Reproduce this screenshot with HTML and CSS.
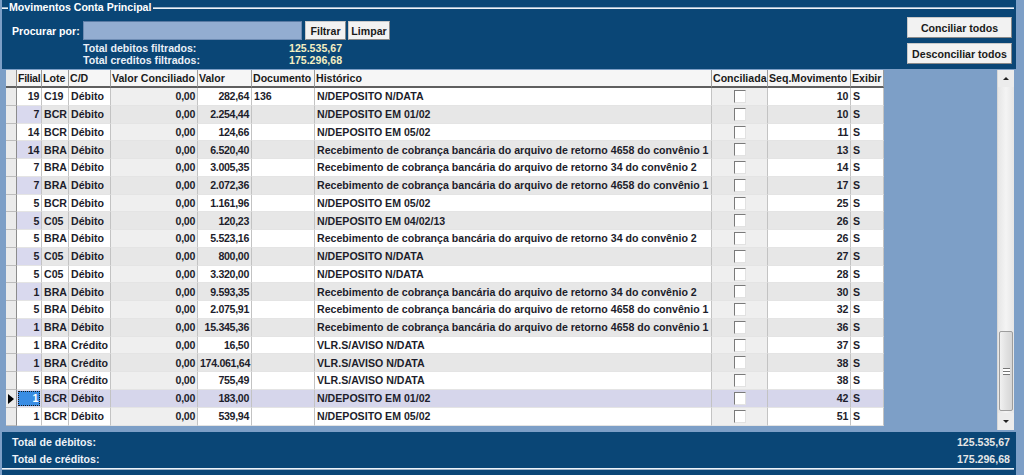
FILE: index.html
```html
<!DOCTYPE html>
<html lang="pt-BR">

<head>
    <meta charset="UTF-8">
    <title>Movimentos Conta Principal</title>
    <link rel="stylesheet" href="styles.css">
</head>

<body>
    <div class="frame">
        <div class="legend">
            <span class="legend-dash"></span>
            <span class="legend-text">Movimentos Conta Principal</span>
            <span class="legend-line"></span>
        </div>

        <div class="top">
            <div class="filters">
                <div class="search-row">
                    <label class="search-label">Procurar por:</label>
                    <input type="text" class="search-input">
                    <button class="btn btn-filter">Filtrar</button>
                    <button class="btn btn-clear">Limpar</button>
                </div>
                <div class="total-row">
                    <span class="total-label">Total debitos filtrados:</span>
                    <span class="total-value">125.535,67</span>
                </div>
                <div class="total-row">
                    <span class="total-label">Total creditos filtrados:</span>
                    <span class="total-value">175.296,68</span>
                </div>
            </div>
            <div class="actions">
                <button class="btn btn-wide">Conciliar todos</button>
                <button class="btn btn-wide">Desconciliar todos</button>
            </div>
        </div>

        <div class="grid">
            <table class="moves">
                <colgroup>
                    <col style="width:11px">
                    <col style="width:25px">
                    <col style="width:27px">
                    <col style="width:42px">
                    <col style="width:87px">
                    <col style="width:54px">
                    <col style="width:63px">
                    <col style="width:397px">
                    <col style="width:56px">
                    <col style="width:83px">
                    <col style="width:33px">
                </colgroup>
                <thead>
                    <tr>
                        <th class="ind"></th>
                        <th class="tight">Filial</th>
                        <th>Lote</th>
                        <th>C/D</th>
                        <th>Valor Conciliado</th>
                        <th>Valor</th>
                        <th>Documento</th>
                        <th>Histórico</th>
                        <th>Conciliada</th>
                        <th>Seq.Movimento</th>
                        <th>Exibir</th>
                    </tr>
                </thead>
                <tbody id="moves-body"></tbody>
            </table>

            <div class="scrollbar">
                <div class="sb-btn"><span class="arrow-up"></span></div>
                <div class="sb-track">
                    <div class="sb-thumb"><span class="grip"></span></div>
                </div>
                <div class="sb-btn"><span class="arrow-down"></span></div>
            </div>
        </div>

        <div class="footer">
            <div class="footer-row"><span>Total de débitos:</span><span class="footer-value">125.535,67</span></div>
            <div class="footer-row"><span>Total de créditos:</span><span class="footer-value">175.296,68</span></div>
        </div>
        <div class="bottom-line"></div>
    </div>

    <script>
        const rec1 = "Recebimento de cobrança bancária do arquivo de retorno 4658 do convênio 1";
        const rec2 = "Recebimento de cobrança bancária do arquivo de retorno 34 do convênio 2";

        const moves = [
            [19, "C19", "Débito", "282,64", "136", "N/DEPOSITO N/DATA", 10],
            [7, "BCR", "Débito", "2.254,44", "", "N/DEPOSITO EM 01/02", 10],
            [14, "BCR", "Débito", "124,66", "", "N/DEPOSITO EM 05/02", 11],
            [14, "BRA", "Débito", "6.520,40", "", rec1, 13],
            [7, "BRA", "Débito", "3.005,35", "", rec2, 14],
            [7, "BRA", "Débito", "2.072,36", "", rec1, 17],
            [5, "BCR", "Débito", "1.161,96", "", "N/DEPOSITO EM 05/02", 25],
            [5, "C05", "Débito", "120,23", "", "N/DEPOSITO EM 04/02/13", 26],
            [5, "BRA", "Débito", "5.523,16", "", rec2, 26],
            [5, "C05", "Débito", "800,00", "", "N/DEPOSITO N/DATA", 27],
            [5, "C05", "Débito", "3.320,00", "", "N/DEPOSITO N/DATA", 28],
            [1, "BRA", "Débito", "9.593,35", "", rec2, 30],
            [5, "BRA", "Débito", "2.075,91", "", rec1, 32],
            [1, "BRA", "Débito", "15.345,36", "", rec1, 36],
            [1, "BRA", "Crédito", "16,50", "", "VLR.S/AVISO N/DATA", 37],
            [1, "BRA", "Crédito", "174.061,64", "", "VLR.S/AVISO N/DATA", 38],
            [5, "BRA", "Crédito", "755,49", "", "VLR.S/AVISO N/DATA", 38],
            [1, "BCR", "Débito", "183,00", "", "N/DEPOSITO EM 01/02", 42],
            [1, "BCR", "Débito", "539,94", "", "N/DEPOSITO EM 05/02", 51]
        ];

        const selected = 17;

        function displayMoves() {
            const body = document.getElementById("moves-body");
            body.innerHTML = "";
            moves.forEach((m, index) => {
                const row = document.createElement("tr");
                if (index % 2 === 1) row.classList.add("alt");
                if (index === selected) row.classList.add("selected");
                row.innerHTML = `
                    <td class="ind">${index === selected ? '<span class="pointer"></span>' : ''}</td>
                    <td class="num filial"><span class="focus">${m[0]}</span></td>
                    <td>${m[1]}</td>
                    <td>${m[2]}</td>
                    <td class="num ro">0,00</td>
                    <td class="num">${m[3]}</td>
                    <td>${m[4]}</td>
                    <td>${m[5]}</td>
                    <td class="ro check"><span class="checkbox"></span></td>
                    <td class="num">${m[6]}</td>
                    <td>S</td>
                `;
                body.appendChild(row);
            });
        }

        displayMoves();
    </script>
</body>

</html>
```

FILE: styles.css
```css
* {
    margin: 0;
    padding: 0;
    box-sizing: border-box;
}

body {
    background: #7d9fc7;
    font-family: 'Liberation Sans', Arial, sans-serif;
    font-size: 10.6px;
    font-weight: bold;
    width: 1024px;
    height: 475px;
    overflow: hidden;
}

.frame {
    margin-left: 2px;
    width: 1014px;
    height: 475px;
    background: #0a4676;
    display: flex;
    flex-direction: column;
}

/* group box title */
.legend {
    height: 15px;
    display: flex;
    align-items: center;
}

.legend-dash,
.legend-line {
    height: 2px;
    border-top: 1px solid #9fb4ca;
    border-bottom: 1px solid #eef3f8;
}

.legend-dash {
    width: 6px;
}

.legend-line {
    flex: 1;
    margin-right: 2px;
}

.legend-text {
    color: #ffffff;
    padding: 0 2px 0 1px;
    line-height: 15px;
}

/* top filter area */
.top {
    height: 54px;
    display: flex;
    justify-content: space-between;
}

.filters {
    padding-left: 10px;
}

.search-row {
    margin-top: 6px;
    display: flex;
    align-items: center;
    height: 19px;
}

.search-label {
    width: 71px;
    color: #ffffff;
}

.search-input {
    width: 219px;
    height: 19px;
    margin-right: 3px;
    background: #93add1;
    border: 1px solid #6d8bb3;
    border-top-color: #5a7aa3;
}

.btn {
    font-family: 'Liberation Sans', Arial, sans-serif;
    font-size: 10.6px;
    font-weight: bold;
    color: #1a1a1a;
    background: #f2f2f2;
    border: 1px solid #c9c9c9;
    border-right-color: #8a8a8a;
    border-bottom-color: #8a8a8a;
    height: 19px;
}

.btn-filter {
    width: 41px;
    margin-right: 2px;
}

.btn-clear {
    width: 42px;
}

.total-row {
    margin-left: 71px;
    height: 12px;
    line-height: 12px;
    display: flex;
}

.search-row + .total-row {
    margin-top: 2px;
}

.total-label {
    width: 206px;
    color: #e9eff7;
}

.total-value {
    color: #f3efc2;
}

.actions {
    margin: 2px 4px 0 0;
    display: flex;
    flex-direction: column;
    gap: 5px;
}

.btn-wide {
    width: 105px;
    height: 21px;
}

/* grid */
.grid {
    height: 363px;
    background: #7d9fc7;
    padding: 1px 2px 0 6px;
    margin-left: -2px;
    width: 1016px;
    display: flex;
    justify-content: space-between;
    align-items: flex-start;
}

.moves {
    width: 878px;
    table-layout: fixed;
    border-collapse: separate;
    border-spacing: 0;
    color: #1d1d2b;
}

.moves th {
    height: 18px;
    background: #f6f6f6;
    text-align: left;
    padding: 0 1px;
    white-space: nowrap;
    overflow: hidden;
    color: #1a1a1a;
    border-right: 1px solid #9c9c9c;
    border-bottom: 2px solid #5f5f5f;
}

.moves th.tight {
    letter-spacing: -0.3px;
    padding: 0 0 0 1px;
}

.moves td {
    height: 17.75px;
    padding: 0 2px;
    white-space: nowrap;
    overflow: hidden;
    background: #ffffff;
    border-right: 1px solid #c3c3c3;
    border-bottom: 1px solid #e4e4e4;
}

.moves .num {
    text-align: right;
    letter-spacing: -0.3px;
}

.moves td.ro {
    background: #efefef;
}

.moves tr.alt td {
    background: #e7e7e7;
}

.moves tr.alt td.filial {
    background: #d9d9ee;
}

.moves tr.selected td {
    background: #d6d6eb;
}

.moves .ind,
.moves tr.alt .ind,
.moves tr.selected .ind {
    background: #ebebeb;
    border-right: 1px solid #8c8c8c;
    border-bottom: 1px solid #bdbdbd;
    padding: 0;
    text-align: center;
}

.moves th.ind {
    border-bottom: 2px solid #5f5f5f;
}

.pointer {
    display: inline-block;
    width: 0;
    height: 0;
    border-top: 5px solid transparent;
    border-bottom: 5px solid transparent;
    border-left: 6px solid #000;
    vertical-align: middle;
}

.moves tr.selected td.filial {
    padding: 1px;
}

.moves tr.selected .focus {
    display: block;
    height: 100%;
    background: #3a8de4;
    color: #ffffff;
    border: 1px dotted #1a1a1a;
    padding-right: 1px;
    line-height: 13px;
}

.moves td.check {
    text-align: center;
    padding: 0;
}

.checkbox {
    display: inline-block;
    width: 12px;
    height: 13px;
    background: #ffffff;
    border-top: 1px solid #7a7a7a;
    border-left: 1px solid #7a7a7a;
    border-right: 1px solid #e2e2e2;
    border-bottom: 1px solid #e2e2e2;
    vertical-align: middle;
}

/* scrollbar */
.scrollbar {
    width: 17px;
    height: 360px;
    background: #ececec;
    border-left: 1px solid #d8d8d8;
    display: flex;
    flex-direction: column;
}

.sb-btn {
    height: 17px;
    display: flex;
    align-items: center;
    justify-content: center;
}

.arrow-up,
.arrow-down {
    width: 0;
    height: 0;
    border-left: 3px solid transparent;
    border-right: 3px solid transparent;
}

.arrow-up {
    border-bottom: 3px solid #222;
}

.arrow-down {
    border-top: 3px solid #222;
}

.sb-track {
    flex: 1;
    display: flex;
    flex-direction: column;
    justify-content: flex-end;
    padding: 0 1px 2px;
    background: linear-gradient(to right, #e6e6e6, #f4f4f4 50%, #e6e6e6);
}

.sb-thumb {
    height: 80px;
    border: 1px solid #9d9d9d;
    border-radius: 2px;
    background: linear-gradient(to right, #f1f1f1, #e2e2e2 50%, #d6d6d6);
    display: flex;
    align-items: center;
    justify-content: center;
}

.grip {
    width: 7px;
    height: 7px;
    border-top: 1px solid #777;
    border-bottom: 1px solid #777;
    background: linear-gradient(#fff 0 2px, #777 2px 3px, #fff 3px);
}

/* footer totals */
.footer {
    height: 36px;
    padding: 2px 6px 0 10px;
    color: #eef2f8;
}

.footer-row {
    height: 17px;
    line-height: 17px;
    display: flex;
    justify-content: space-between;
}

.footer-value {
    color: #e6e6e6;
}

.bottom-line {
    height: 2px;
    border-top: 1px solid #eef3f8;
    border-bottom: 1px solid #9fb4ca;
    margin-right: 2px;
}
```
